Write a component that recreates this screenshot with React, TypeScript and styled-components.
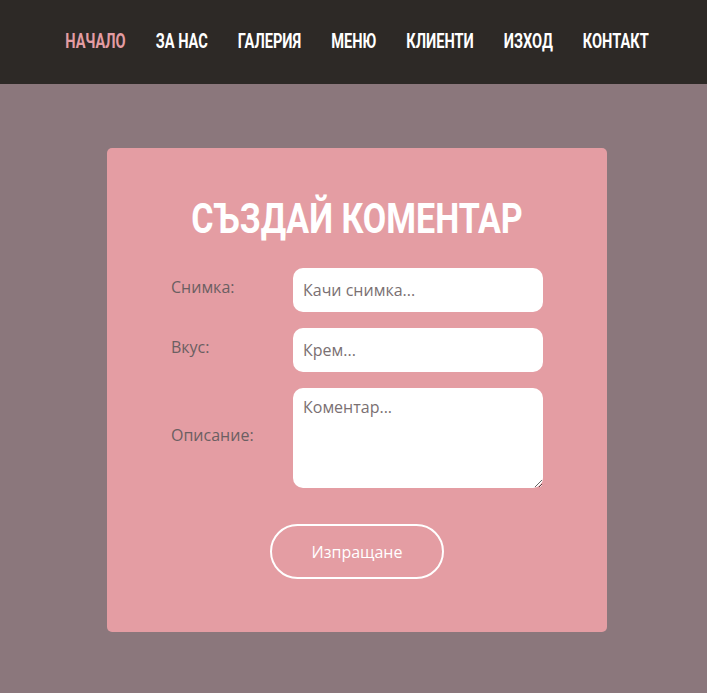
import React from "react";
import styled, { createGlobalStyle } from "styled-components";

const Global = createGlobalStyle`
  html, body { margin: 0; padding: 0; }
  body { background: #8b777c; font-family: "Open Sans", "Noto Sans", sans-serif; }
  * { box-sizing: border-box; }
`;

const Page = styled.div`
  min-height: 693px;
  background: #8b777c;
  display: flex;
  flex-direction: column;
`;

const NavBar = styled.nav`
  height: 84px;
  background: #2d2926;
  display: flex;
  align-items: center;
  justify-content: center;
  gap: 30px;
  padding-left: 7px;
`;

const NavLink = styled.a<{ $active?: boolean }>`
  display: inline-block;
  white-space: nowrap;
  font-family: Roboto, "Liberation Sans", sans-serif;
  font-weight: 700;
  font-size: 14.6px;
  line-height: 20px;
  transform: scaleY(1.36);
  margin-top: -3px;
  color: ${(p) => (p.$active ? "#e49da3" : "#ffffff")};
  text-decoration: none;
`;

const Main = styled.main`
  display: flex;
  justify-content: center;
  padding-top: 64px;
  padding-left: 7px;
`;

const Card = styled.section`
  width: 500px;
  background: #e49da3;
  border-radius: 5px;
  padding: 50px 64px 53px;
  display: flex;
  flex-direction: column;
  align-items: stretch;
`;

const Title = styled.h1`
  margin: 0 0 30px;
  height: 40px;
  text-align: center;
  white-space: nowrap;
  color: #ffffff;
  font-family: Roboto, "Liberation Sans", sans-serif;
  font-weight: 700;
  font-size: 34px;
  line-height: 40px;
  transform: scaleY(1.25);
`;

const Form = styled.form`
  display: grid;
  grid-template-columns: 122px 250px;
  row-gap: 16px;
  align-items: center;
`;

const Label = styled.label`
  color: #6b5f62;
  font-size: 16px;
  line-height: 22px;
  margin-top: -6px;
`;

const Input = styled.input`
  width: 250px;
  height: 44px;
  border: none;
  border-radius: 10px;
  background: #ffffff;
  padding: 0 10px;
  font-family: "Open Sans", sans-serif;
  font-size: 16px;
  color: #333;
  outline: none;
  &::placeholder { color: #7a7072; }
`;

const TextArea = styled.textarea`
  width: 250px;
  height: 100px;
  border: none;
  border-radius: 10px;
  background: #ffffff;
  padding: 8px 10px;
  font-family: "Open Sans", sans-serif;
  font-size: 16px;
  line-height: 22px;
  color: #333;
  outline: none;
  display: block;
  &::placeholder { color: #7a7072; }
`;

const ButtonRow = styled.div`
  display: flex;
  justify-content: center;
  margin-top: 36px;
`;

const SendButton = styled.button`
  width: 174px;
  height: 55px;
  border: 2px solid #ffffff;
  border-radius: 28px;
  background: transparent;
  color: #ffffff;
  font-family: "Open Sans", sans-serif;
  font-size: 16px;
  cursor: pointer;
`;

const links = ["НАЧАЛО", "ЗА НАС", "ГАЛЕРИЯ", "МЕНЮ", "КЛИЕНТИ", "ИЗХОД", "КОНТАКТ"];

export default function App() {
  return (
    <Page>
      <Global />
      <NavBar>
        {links.map((l, i) => (
          <NavLink key={l} href="#" $active={i === 0}>
            {l}
          </NavLink>
        ))}
      </NavBar>
      <Main>
        <Card>
          <Title>СЪЗДАЙ КОМЕНТАР</Title>
          <Form onSubmit={(e) => e.preventDefault()}>
            <Label htmlFor="photo">Снимка:</Label>
            <Input id="photo" placeholder="Качи снимка..." />
            <Label htmlFor="taste">Вкус:</Label>
            <Input id="taste" placeholder="Крем..." />
            <Label htmlFor="desc">Описание:</Label>
            <TextArea id="desc" placeholder="Коментар..." />
          </Form>
          <ButtonRow>
            <SendButton type="button">Изпращане</SendButton>
          </ButtonRow>
        </Card>
      </Main>
    </Page>
  );
}
